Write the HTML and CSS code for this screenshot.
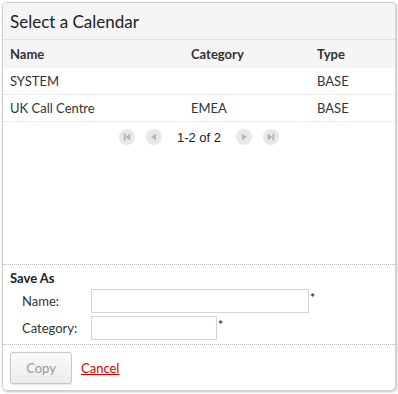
FILE: index.html
```html
<!DOCTYPE html>
<html lang="en">
<head>
    <meta charset="UTF-8">
    <title>Select a Calendar</title>
    <link rel="stylesheet" href="styles.css">
</head>
<body>
    <div class="dialog">
        <header class="dialog-header">
            <h1>Select a Calendar</h1>
        </header>

        <section class="dialog-body">
            <table class="calendar-table">
                <thead>
                    <tr>
                        <th class="col-name">Name</th>
                        <th class="col-category">Category</th>
                        <th class="col-type">Type</th>
                    </tr>
                </thead>
                <tbody>
                    <tr>
                        <td>SYSTEM</td>
                        <td></td>
                        <td>BASE</td>
                    </tr>
                    <tr>
                        <td>UK Call Centre</td>
                        <td>EMEA</td>
                        <td>BASE</td>
                    </tr>
                </tbody>
            </table>

            <div class="pager">
                <span class="pager-btn">
                    <svg width="16" height="16" viewBox="0 0 16 16"><circle cx="8" cy="8" r="8" fill="#e8e8e8"/><rect x="4.8" y="4.5" width="1.8" height="7" fill="#b3b3b3"/><path d="M11.2 4.5 L6.6 8 L11.2 11.5 Z" fill="#b3b3b3"/></svg>
                </span>
                <span class="pager-btn">
                    <svg width="16" height="16" viewBox="0 0 16 16"><circle cx="8" cy="8" r="8" fill="#e8e8e8"/><path d="M10 4.5 L5.4 8 L10 11.5 Z" fill="#b3b3b3"/></svg>
                </span>
                <span class="pager-text">1-2 of 2</span>
                <span class="pager-btn">
                    <svg width="16" height="16" viewBox="0 0 16 16"><circle cx="8" cy="8" r="8" fill="#e8e8e8"/><path d="M6 4.5 L10.6 8 L6 11.5 Z" fill="#b3b3b3"/></svg>
                </span>
                <span class="pager-btn">
                    <svg width="16" height="16" viewBox="0 0 16 16"><circle cx="8" cy="8" r="8" fill="#e8e8e8"/><path d="M4.8 4.5 L9.4 8 L4.8 11.5 Z" fill="#b3b3b3"/><rect x="9.4" y="4.5" width="1.8" height="7" fill="#b3b3b3"/></svg>
                </span>
            </div>
        </section>

        <section class="save-as">
            <h2>Save As</h2>
            <div class="field">
                <label>Name:</label>
                <input type="text" class="input-name">
                <span class="required">*</span>
            </div>
            <div class="field">
                <label>Category:</label>
                <input type="text" class="input-category">
                <span class="required">*</span>
            </div>
        </section>

        <footer class="dialog-footer">
            <button class="copy-button" disabled>Copy</button>
            <a href="#" class="cancel-link">Cancel</a>
        </footer>
    </div>
</body>
</html>
```

FILE: styles.css
```css
body {
    margin: 0;
    padding: 2px;
    background-color: #fff;
    font-family: Lato, 'Open Sans', sans-serif;
    font-size: 13px;
    color: #333;
}
.dialog {
    width: 392px;
    height: 387px;
    border: 1px solid #cfcfcf;
    border-radius: 5px;
    box-shadow: 1px 1px 3px rgba(0, 0, 0, 0.25);
    background-color: #fff;
    display: flex;
    flex-direction: column;
    overflow: hidden;
}
.dialog-header {
    height: 36px;
    background-color: #f5f5f5;
    border-bottom: 1px solid #e2e2e2;
    padding: 0 7px;
    display: flex;
    align-items: center;
}
h1 {
    margin: 0;
    font-size: 17px;
    font-weight: normal;
    color: #222;
}
.dialog-body {
    flex-grow: 1;
    border-bottom: 1px dotted #bbb;
}
.calendar-table {
    width: 100%;
    border-collapse: collapse;
}
.calendar-table th {
    height: 28px;
    background-color: #f5f5f5;
    text-align: left;
    font-weight: bold;
    color: #333;
    padding: 0 7px;
}
.calendar-table td {
    height: 26px;
    padding: 0 7px;
    border-bottom: 1px solid #ececec;
    color: #333;
}
.col-name {
    width: 167px;
}
.col-category {
    width: 112px;
}
.pager {
    display: flex;
    align-items: center;
    justify-content: center;
    gap: 11px;
    height: 30px;
    font-family: 'Liberation Sans', Arial, sans-serif;
    font-size: 13px;
    color: #222;
}
.pager-btn {
    display: flex;
}
.pager-text {
    margin: 0 4px;
}
.save-as {
    height: 79px;
    border-bottom: 1px dotted #bbb;
    padding: 0 7px;
}
h2 {
    margin: 5px 0 3px;
    font-size: 13px;
    font-weight: bold;
    color: #222;
}
.field {
    display: flex;
    align-items: flex-start;
    margin-bottom: 3px;
}
.field label {
    width: 69px;
    padding-left: 12px;
    line-height: 24px;
    color: #333;
}
.field input {
    height: 24px;
    box-sizing: border-box;
    border: 1px solid #d4d4d4;
    padding: 2px 4px;
    margin: 0;
    font-family: inherit;
}
.input-name {
    width: 218px;
}
.input-category {
    width: 126px;
}
.required {
    font-size: 12px;
    font-weight: bold;
    line-height: 18px;
    margin-left: 1px;
}
.dialog-footer {
    height: 45px;
    display: flex;
    align-items: center;
    padding: 0 7px;
    gap: 9px;
}
.copy-button {
    width: 62px;
    height: 32px;
    background: linear-gradient(#fafafa, #ececec);
    border: 1px solid #c8c8c8;
    border-radius: 3px;
    font-family: inherit;
    font-size: 13px;
    color: #999;
    box-shadow: 0 1px 1px rgba(0, 0, 0, 0.1);
}
.cancel-link {
    color: #d40000;
    text-decoration: underline;
    margin-top: 1px;
}
```
